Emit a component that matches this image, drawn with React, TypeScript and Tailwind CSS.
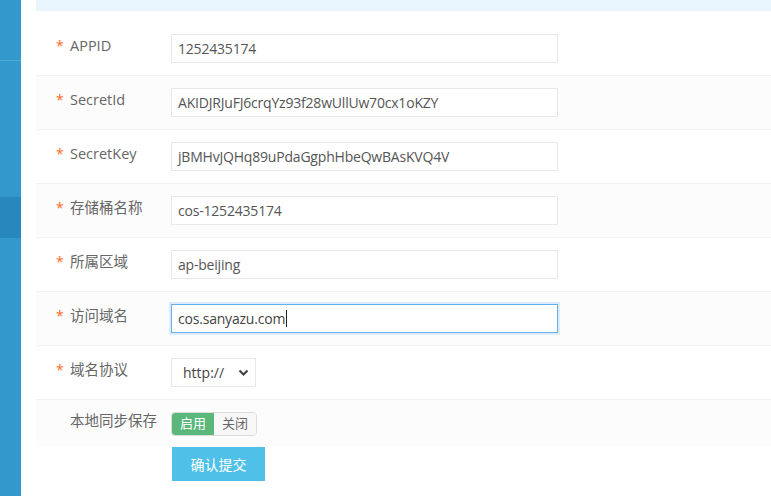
import React from "react";

const font = { fontFamily: '"Open Sans", "Noto Sans CJK SC", sans-serif' };

function Row({
  label,
  required = true,
  alt = false,
  children,
  h = "h-[54px]",
}: {
  label: string;
  required?: boolean;
  alt?: boolean;
  children: React.ReactNode;
  h?: string;
}) {
  return (
    <div
      className={`flex items-center ${h} border-b border-[#f2f2f2] ${
        alt ? "bg-[#fcfcfc]" : "bg-white"
      }`}
    >
      <div className="w-[135px] shrink-0 flex items-center pl-[20px] -mt-[6px]">
        <span className="w-[14px] text-[#ff6a1a] text-[14px] leading-none">
          {required ? "*" : ""}
        </span>
        <span className="text-[14.5px] text-[#666]">{label}</span>
      </div>
      <div className="flex items-center">{children}</div>
    </div>
  );
}

function Field({ value }: { value: string }) {
  return (
    <div className="w-[387px] h-[29px] border border-[#e8e8e8] bg-white flex items-center pl-[6px] text-[14px] tracking-[-0.2px] text-[#555]">
      {value}
    </div>
  );
}

export default function App() {
  return (
    <div className="w-[771px] h-[496px] overflow-hidden flex bg-white" style={font}>
      <div className="w-[21px] shrink-0 bg-[#3399cc] flex flex-col">
        <div className="h-[60px]" />
        <div className="h-px bg-[#52a9d6]" />
        <div className="h-[136px]" />
        <div className="h-[41px] bg-[#2688bd]" />
      </div>
      <div className="w-[15px] shrink-0" />
      <div className="flex-1 flex flex-col">
        <div className="h-[11px] bg-[#eaf6fd]" />
        <div className="h-[11px]" />
        <Row label="APPID">
          <Field value="1252435174" />
        </Row>
        <Row label="SecretId" alt>
          <Field value="AKIDJRJuFJ6crqYz93f28wUllUw70cx1oKZY" />
        </Row>
        <Row label="SecretKey">
          <Field value="jBMHvJQHq89uPdaGgphHbeQwBAsKVQ4V" />
        </Row>
        <Row label="存储桶名称" alt>
          <Field value="cos-1252435174" />
        </Row>
        <Row label="所属区域">
          <Field value="ap-beijing" />
        </Row>
        <Row label="访问域名" alt>
          <div className="w-[387px] h-[29px] border border-[#66afe9] bg-white flex items-center pl-[6px] text-[14px] tracking-[-0.2px] text-[#444] shadow-[0_0_0_2px_#dcecfb]">
            cos.sanyazu.com
            <span className="inline-block w-px h-[17px] bg-[#222] ml-px" />
          </div>
        </Row>
        <Row label="域名协议">
          <div className="w-[85px] h-[29px] border border-[#e8e8e8] bg-white flex items-center justify-between pl-[11px] pr-[6px] text-[14px] text-[#444]">
            <span>http://</span>
            <svg width="11" height="8" viewBox="0 0 11 8">
              <path d="M1.5 1.5 L5.5 5.5 L9.5 1.5" fill="none" stroke="#444" strokeWidth="2.2" />
            </svg>
          </div>
        </Row>
        <Row label="本地同步保存" required={false} alt h="h-[47px] border-b-0">
          <div className="flex h-[24px] rounded-[4px] border border-[#dcdcdc] overflow-hidden text-[13px] mt-[1px]">
            <div className="w-[42px] bg-[#5cb77a] text-white flex items-center justify-center">启用</div>
            <div className="w-[42px] bg-[#f8f8f8] text-[#666] flex items-center justify-center">关闭</div>
          </div>
        </Row>
        <div className="pl-[136px]">
          <div className="w-[93px] h-[34px] bg-[#4fc0e8] text-white text-[14px] flex items-center justify-center">
            确认提交
          </div>
        </div>
      </div>
    </div>
  );
}
